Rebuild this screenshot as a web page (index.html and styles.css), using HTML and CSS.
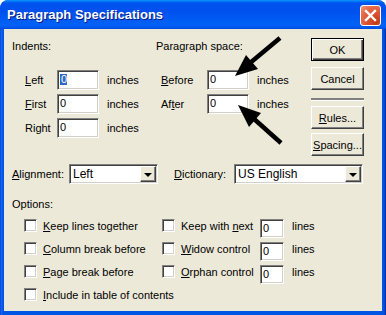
FILE: index.html
```html
<!DOCTYPE html>
<html lang="en">
<head>
  <meta charset="UTF-8">
  <title>Paragraph Specifications</title>
  <link rel="stylesheet" href="styles.css">
</head>
<body>
  <div class="window">
    <div class="titlebar">
      <span class="title">Paragraph Specifications</span>
      <button class="close">
        <svg width="19" height="19" viewBox="0 0 19 19"><path d="M5 5 L14 14 M14 5 L5 14" stroke="#fff" stroke-width="2.4" stroke-linecap="square"/></svg>
      </button>
    </div>
    <div class="client">
      <div class="top">
        <div class="indents">
          <div class="group-title">Indents:</div>
          <div class="rows">
            <div class="row"><span class="lbl"><u>L</u>eft</span><span class="field"><span class="sel">0</span></span><span>inches</span></div>
            <div class="row"><span class="lbl"><u>F</u>irst</span><span class="field">0</span><span>inches</span></div>
            <div class="row"><span class="lbl">Right</span><span class="field">0</span><span>inches</span></div>
          </div>
        </div>
        <div class="spacing">
          <div class="group-title">Paragraph space:</div>
          <div class="rows">
            <div class="row"><span class="lbl"><u>B</u>efore</span><span class="field">0</span><span>inches</span></div>
            <div class="row"><span class="lbl">Af<u>t</u>er</span><span class="field">0</span><span>inches</span></div>
          </div>
        </div>
        <div class="buttons">
          <button class="btn default">OK</button>
          <button class="btn">Cancel</button>
          <div class="sep"></div>
          <button class="btn"><u>R</u>ules...</button>
          <button class="btn"><u>S</u>pacing...</button>
        </div>
      </div>

      <div class="combo-row">
        <span class="lbl-align"><u>A</u>lignment:</span>
        <div class="combo align"><span class="combo-text">Left</span><span class="drop"></span></div>
        <span class="lbl-dict"><u>D</u>ictionary:</span>
        <div class="combo dict"><span class="combo-text">US English</span><span class="drop"></span></div>
      </div>

      <div class="group-title options-title">Options:</div>
      <div class="options">
        <div class="check"><span class="box"></span><span><u>K</u>eep lines together</span></div>
        <div class="check"><span class="box"></span><span>Keep with <u>n</u>ext</span></div>
        <span class="field small">0</span>
        <span>lines</span>

        <div class="check"><span class="box"></span><span><u>C</u>olumn break before</span></div>
        <div class="check"><span class="box"></span><span><u>W</u>idow control</span></div>
        <span class="field small">0</span>
        <span>lines</span>

        <div class="check"><span class="box"></span><span><u>P</u>age break before</span></div>
        <div class="check"><span class="box"></span><span><u>O</u>rphan control</span></div>
        <span class="field small">0</span>
        <span>lines</span>

        <div class="check wide"><span class="box"></span><span><u>I</u>nclude in table of contents</span></div>
      </div>
    </div>

    <svg class="arrows" width="386" height="315" viewBox="0 0 386 315">
      <line x1="280" y1="38" x2="250" y2="63" stroke="#000" stroke-width="4.5"/>
      <polygon points="235,76 246,55 258,69" fill="#000"/>
      <line x1="281" y1="143" x2="253" y2="118" stroke="#000" stroke-width="4.5"/>
      <polygon points="238,105 261,113 249,127" fill="#000"/>
    </svg>
  </div>
</body>
</html>
```

FILE: styles.css
```css
* { box-sizing: border-box; }
body { margin: 0; background: #fff; font: 11px "Liberation Sans", Arial, sans-serif; color: #000; }
u { text-decoration: underline; text-underline-offset: 1px; }

.window {
  width: 386px; height: 315px; position: relative; overflow: hidden;
  display: flex; flex-direction: column;
  background: linear-gradient(90deg, #0831d9 0, #166aee 1px, #0055e5 3px, #0055e5 calc(100% - 3px), #0a44c8 calc(100% - 1px), #001ea0 100%);
  border-radius: 8px 8px 0 0;
}
.titlebar {
  height: 29px; flex: none; display: flex; align-items: center; justify-content: space-between;
  padding: 0 5px 0 7px; border-radius: 8px 8px 0 0;
  background: linear-gradient(#0997ff, #0053ee 10%, #0050ee 40%, #0062f6 85%, #0058ee 95%, #0047d8);
}
.title { color: #fff; font-weight: bold; font-size: 13px; text-shadow: 1px 1px #0a1883; letter-spacing: 0; }
.close {
  width: 21px; height: 21px; margin-top: 2px; padding: 0; border: 1px solid #fff; border-radius: 3px;
  background: radial-gradient(circle at 80% 85%, #c23b17 0, #dd5434 45%, #e7714f 75%, #f2a08a 100%);
  display: flex; align-items: center; justify-content: center;
}
.close svg { display: block; }

.client { flex: 1; margin: 0 4px 4px; background: #ece9d8; }

.top { display: flex; align-items: flex-start; }
.group-title { height: 13px; line-height: 13px; }
.indents { margin-left: 8px; width: 144px; padding-top: 11px; }
.spacing { width: 155px; padding-top: 11px; }
.rows { margin-top: 17px; display: flex; flex-direction: column; gap: 4px; }
.row { display: flex; align-items: center; height: 20px; }
.indents .lbl { width: 45px; padding-left: 13px; }
.spacing .lbl { width: 51px; padding-left: 5px; }

.field {
  width: 42px; height: 20px; margin-right: 8px; padding-left: 2px;
  background: #fff; line-height: 16px;
  border: 1px solid; border-color: #808080 #fff #fff #808080;
  box-shadow: inset 1px 1px #404040, inset -1px -1px #d4d0c8;
}
.sel { display: inline-block; background: #316ac5; color: #fff; line-height: 11px; padding: 0 0 0 1px; width: 7px; }

.buttons { width: 53px; margin-top: 9px; display: flex; flex-direction: column; }
.btn {
  height: 23px; padding: 0; font: inherit; color: #000; background: #ece9d8;
  border: 1px solid; border-color: #fff #404040 #404040 #fff;
  box-shadow: inset -1px -1px #808080;
}
.btn + .btn { margin-top: 6px; }
.btn.default {
  border-color: #000;
  box-shadow: inset 1px 1px #fff, inset -1px -1px #404040, inset -2px -2px #808080;
}
.sep { margin: 8px 0 5px; border-top: 2px solid #808080; border-bottom: 1px solid #fff; }
.sep + .btn { margin-top: 0; }
.buttons .btn:last-child { margin-top: 4px; }

.combo-row { display: flex; align-items: center; height: 20px; margin-top: 8px; padding-left: 8px; }
.lbl-align { width: 57px; }
.lbl-dict { width: 60px; margin-left: 16px; }
.combo {
  height: 20px; display: flex; align-items: center; background: #fff;
  border: 1px solid; border-color: #808080 #fff #fff #808080;
  box-shadow: inset 1px 1px #404040, inset -1px -1px #d4d0c8;
  padding: 1px;
}
.combo.align { width: 89px; }
.combo.dict { width: 129px; }
.combo-text { flex: 1; padding-left: 2px; font-size: 12px; }
.drop {
  width: 16px; height: 16px; position: relative; background: #ece9d8;
  border: 1px solid; border-color: #fff #404040 #404040 #fff;
  box-shadow: inset -1px -1px #808080;
  display: flex; align-items: center; justify-content: center;
}
.drop::after {
  content: ""; width: 0; height: 0; margin-top: 1px;
  border-left: 4px solid transparent; border-right: 4px solid transparent; border-top: 4px solid #000;
}

.options-title { margin-top: 14px; padding-left: 8px; }
.options {
  display: grid; grid-template-columns: 138px 98px 32px auto; grid-auto-rows: 23px;
  align-items: center; margin: 3px 0 0 20px;
}
.check { display: flex; align-items: center; gap: 6px; }
.check.wide { grid-column: 1 / span 2; }
.box {
  width: 13px; height: 13px; flex: none; background: #fff;
  border: 1px solid; border-color: #808080 #fff #fff #808080;
  box-shadow: inset 1px 1px #404040, inset -1px -1px #d4d0c8;
}
.field.small { width: 24px; height: 19px; align-self: start; margin-top: 5px; }

.arrows { position: absolute; left: 0; top: 0; pointer-events: none; }
```
